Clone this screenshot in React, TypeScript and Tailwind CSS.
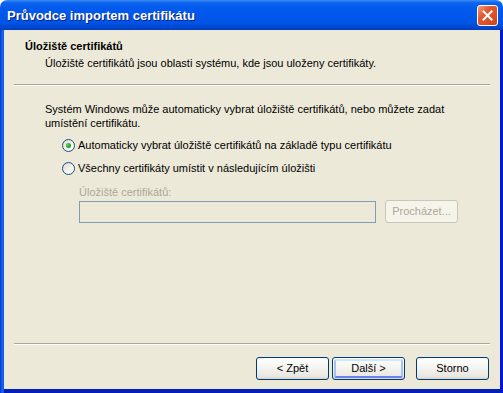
const font = "font-['Tahoma','Liberation_Sans',Arial,sans-serif]";

function Radio({ checked }: { checked?: boolean }) {
  return (
    <span className="relative w-[13px] h-[13px] rounded-full border border-[#1C5180] bg-[linear-gradient(135deg,#DCD9CF_0%,#F4F3EE_55%,#FFFFFF_100%)] shrink-0 flex items-center justify-center">
      {checked && (
        <span className="w-[5px] h-[5px] rounded-full bg-[radial-gradient(circle_at_35%_35%,#55D655_0%,#21A121_60%,#1A8A1A_100%)]" />
      )}
    </span>
  );
}

function XpButton({
  children,
  isDefault,
  disabled,
}: {
  children: React.ReactNode;
  isDefault?: boolean;
  disabled?: boolean;
}) {
  if (disabled) {
    return (
      <div className="w-[73px] h-[23px] rounded-[3px] border border-[#C9C7BA] bg-[#F5F4EA] text-[#ACA899] flex items-center justify-center">
        {children}
      </div>
    );
  }
  return (
    <div className="w-[73px] h-[23px] rounded-[3px] border border-[#003C74] bg-[linear-gradient(180deg,#FFFFFF_0%,#F3F3EF_50%,#E8E6DE_90%,#D6D0C5_100%)] p-px">
      <div
        className={[
          "w-full h-full rounded-[2px] flex items-center justify-center text-black",
          isDefault ? "border-2 border-[#A6C2ED] border-t-[#CEE7FF] border-b-[#6982EE]" : "",
        ].join(" ")}
      >
        {children}
      </div>
    </div>
  );
}

export default function App() {
  return (
    <div className={`w-[503px] h-[393px] flex flex-col bg-white text-[11px] leading-[13px] ${font}`}>
      {/* Title bar */}
      <div className="h-[30px] shrink-0 rounded-t-[7px] bg-[linear-gradient(180deg,#3C8CF6_0%,#0A62EC_10%,#0058EE_35%,#0055E5_75%,#0046CF_92%,#003CB8_100%)] flex items-center pl-[7px] pr-[5px]">
        <span className="font-['Liberation_Sans',Arial,sans-serif] font-bold text-[13px] text-white [text-shadow:1px_1px_0_#0A1E80]">
          Průvodce importem certifikátu
        </span>
        <div className="ml-auto w-[21px] h-[21px] rounded-[3px] border border-white bg-[linear-gradient(135deg,#F0A080_0%,#E45A30_35%,#D04418_100%)] flex items-center justify-center">
          <svg width="11" height="11" viewBox="0 0 11 11">
            <path d="M1.5 1.5 L9.5 9.5 M9.5 1.5 L1.5 9.5" stroke="#fff" strokeWidth="2" strokeLinecap="square" />
          </svg>
        </div>
      </div>

      {/* Body with frame */}
      <div className="flex-1 flex bg-[#0020B8]">
        <div className="w-[4px] bg-[linear-gradient(90deg,#0831D9_0%,#166AEE_60%,#0A50E0_100%)]" />
        <div className="flex-1 flex flex-col bg-[#ECE9D8] mb-[4px] text-black">
          {/* Header */}
          <div className="pl-[21px] pt-[10px] h-[54px]">
            <div className="font-bold">Úložiště certifikátů</div>
            <div className="pl-[20px] mt-[4px]">
              Úložiště certifikátů jsou oblasti systému, kde jsou uloženy certifikáty.
            </div>
          </div>
          <div className="mx-[10px] h-[2px] border-t border-[#ACA899] border-b border-b-white" />

          {/* Content */}
          <div className="flex-1 pl-[41px] pt-[16px]">
            <p className="leading-[14px]">
              Systém Windows může automaticky vybrat úložiště certifikátů, nebo můžete zadat
              <br />
              umístění certifikátu.
            </p>
            <div className="pl-[17px] mt-[9px] flex flex-col gap-[10px]">
              <div className="flex items-center gap-[3px]">
                <Radio checked />
                <span>Automaticky vybrat úložiště certifikátů na základě typu certifikátu</span>
              </div>
              <div className="flex items-center gap-[3px]">
                <Radio />
                <span>Všechny certifikáty umístit v následujícím úložišti</span>
              </div>
            </div>
            <div className="pl-[34px] mt-[11px]">
              <div className="text-[#ACA899]">Úložiště certifikátů:</div>
              <div className="flex items-center gap-[9px] mt-[1px]">
                <div className="w-[297px] h-[22px] border border-[#7F9DB9] bg-[#ECE9D8]" />
                <XpButton disabled>Procházet...</XpButton>
              </div>
            </div>
          </div>

          {/* Footer */}
          <div className="mx-[10px] h-[2px] border-t border-[#ACA899] border-b border-b-white" />
          <div className="h-[44px] flex items-start justify-end pr-[11px] pt-[12px]">
            <div className="flex gap-[3px] mr-[11px]">
              <XpButton>&lt; Zpět</XpButton>
              <XpButton isDefault>Další &gt;</XpButton>
            </div>
            <XpButton>Storno</XpButton>
          </div>
        </div>
        <div className="w-[3px] bg-[#0019CF]" />
      </div>
    </div>
  );
}
